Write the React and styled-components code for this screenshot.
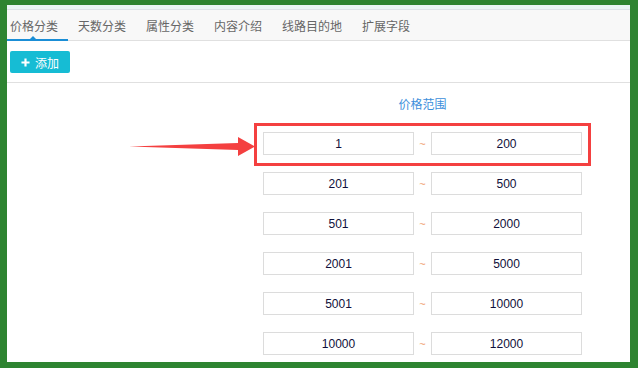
import React from "react";
import styled, { createGlobalStyle } from "styled-components";

const tabs = ["价格分类", "天数分类", "属性分类", "内容介绍", "线路目的地", "扩展字段"];
const ranges = [
  ["1", "200"],
  ["201", "500"],
  ["501", "2000"],
  ["2001", "5000"],
  ["5001", "10000"],
  ["10000", "12000"],
];

const App = () => {
  return (
    <>
      <GlobalStyle />
      <Frame>
        <Panel>
          <TopStrip />
          <TabBar>
            {tabs.map((t, i) => (
              <Tab key={t} $active={i === 0} $first={i === 0}>
                {t}
              </Tab>
            ))}
          </TabBar>
          <Toolbar>
            <AddButton>
              <PlusIcon viewBox="0 0 10 10">
                <path d="M5 0.5v9M0.5 5h9" />
              </PlusIcon>
              添加
            </AddButton>
          </Toolbar>
          <Form>
            <Label>价格范围</Label>
            <Rows>
              {ranges.map(([from, to], i) => (
                <Row key={i}>
                  {i === 0 && (
                    <Highlight>
                      <Arrow viewBox="0 0 126 20">
                        <polygon points="0,9.5 109,6 109,0 126,9.5 109,19 109,13" />
                      </Arrow>
                    </Highlight>
                  )}
                  <RangeInput readOnly value={from} />
                  <Tilde>~</Tilde>
                  <RangeInput readOnly value={to} />
                </Row>
              ))}
            </Rows>
          </Form>
        </Panel>
      </Frame>
    </>
  );
};

export default App;

const GlobalStyle = createGlobalStyle`
  html, body {
    margin: 0;
    padding: 0;
    background: #2e8431;
  }
  body {
    font-family: "Liberation Sans", "Noto Sans CJK SC", sans-serif;
  }
`;

const Frame = styled("div")`
  width: 638px;
  height: 368px;
  box-sizing: border-box;
  padding: 5px 8px 6px 7px;
  background: #2e8431;
`;

const Panel = styled("div")`
  height: 100%;
  background: #fff;
  display: flex;
  flex-direction: column;
  overflow: hidden;
`;

const TopStrip = styled("div")`
  height: 4px;
  background: #eaf5f5;
  border-bottom: 1px solid #dde3e8;
`;

const TabBar = styled("div")`
  height: 30px;
  display: flex;
  align-items: stretch;
  background: #f8f8f8;
  border-bottom: 1px solid #e0e0e0;
`;

const Tab = styled("div")`
  position: relative;
  display: flex;
  align-items: center;
  padding: 0 10px 0 ${(p) => (p.$first ? "3px" : "10px")};
  font-family: "Noto Sans CJK SC", sans-serif;
  font-size: 12px;
  color: #666;

  ${(p) =>
    p.$active &&
    `
    &::after {
      content: "";
      position: absolute;
      left: 0;
      right: 0;
      bottom: -1px;
      height: 2px;
      background: #1a8ed6;
    }
    &::before {
      content: "";
      position: absolute;
      left: 22px;
      bottom: 0;
      border-left: 4px solid transparent;
      border-right: 4px solid transparent;
      border-bottom: 4px solid #1a8ed6;
    }
  `}
`;

const Toolbar = styled("div")`
  display: flex;
  padding: 10px 3px 9px;
  border-bottom: 1px solid #e0e0e0;
`;

const AddButton = styled("button")`
  display: flex;
  align-items: center;
  gap: 5px;
  width: 60px;
  height: 22px;
  padding: 0 0 0 11px;
  border: none;
  border-radius: 2px;
  background: #16bcd4;
  color: #fff;
  font-family: "Noto Sans CJK SC", sans-serif;
  font-size: 12px;
`;

const PlusIcon = styled("svg")`
  width: 9px;
  height: 9px;
  stroke: #fff;
  stroke-width: 2.4;
  fill: none;
`;

const Form = styled("div")`
  padding: 11px 0 0 256px;
  display: flex;
  flex-direction: column;
  width: 319px;
`;

const Label = styled("div")`
  height: 20px;
  line-height: 20px;
  text-align: center;
  font-family: "Noto Sans CJK SC", sans-serif;
  font-size: 12px;
  color: #3d8fdb;
`;

const Rows = styled("div")`
  margin-top: 18px;
  display: flex;
  flex-direction: column;
  gap: 17px;
`;

const Row = styled("div")`
  position: relative;
  display: flex;
  align-items: center;
`;

const RangeInput = styled("input")`
  width: 151px;
  height: 23px;
  box-sizing: border-box;
  padding: 0;
  margin: 0;
  border: 1px solid #dcdcdc;
  background: #fff;
  text-align: center;
  font-family: "Liberation Sans", Arial, sans-serif;
  font-size: 12px;
  color: #10103a;
  outline: none;
`;

const Tilde = styled("span")`
  width: 17px;
  text-align: center;
  font-size: 11px;
  color: #f0a070;
`;

const Highlight = styled("div")`
  position: absolute;
  top: -9px;
  left: -9px;
  right: -9px;
  bottom: -11px;
  border: 3px solid #f44040;
  pointer-events: none;
`;

const Arrow = styled("svg")`
  position: absolute;
  right: calc(100% + 2px);
  top: 11px;
  width: 126px;
  height: 20px;
  fill: #f44040;
`;
